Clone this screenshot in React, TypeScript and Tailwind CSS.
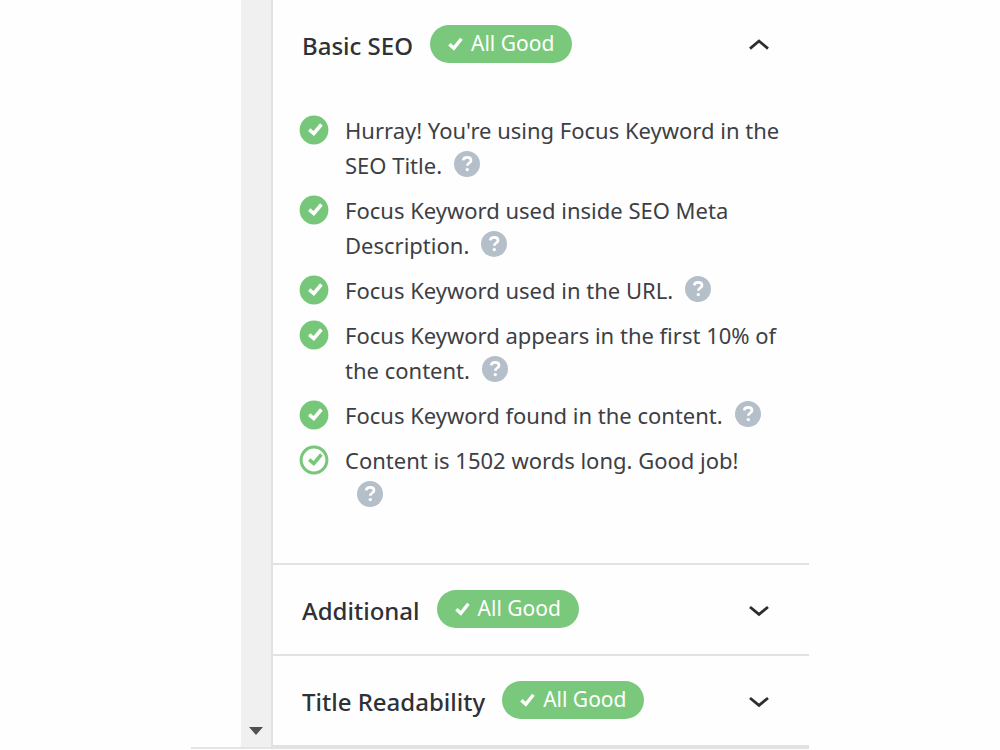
import { useState } from "react";

type Check = { text: string; outlined?: boolean };
type Section = { title: string; checks: Check[] };

const sections: Section[] = [
  {
    title: "Basic SEO",
    checks: [
      { text: "Hurray! You're using Focus Keyword in the SEO Title." },
      { text: "Focus Keyword used inside SEO Meta Description." },
      { text: "Focus Keyword used in the URL." },
      { text: "Focus Keyword appears in the first 10% of the content." },
      { text: "Focus Keyword found in the content." },
      { text: "Content is 1502 words long. Good job!", outlined: true },
    ],
  },
  { title: "Additional", checks: [] },
  { title: "Title Readability", checks: [] },
];

function StatusIcon({ outlined }: { outlined?: boolean }) {
  return (
    <svg viewBox="0 0 30 30" className="mt-0.5 size-[30px] shrink-0" fill="none" aria-hidden="true">
      {outlined ? (
        <circle cx="15" cy="15" r="12.9" fill="#fff" stroke="#76c779" strokeWidth="3" />
      ) : (
        <circle cx="15" cy="15" r="14.4" fill="#76c779" />
      )}
      <path
        d="M10.2 14.6l4.6 3.9 7.6-9"
        stroke={outlined ? "#76c779" : "#fff"}
        strokeWidth="3.5"
      />
    </svg>
  );
}

function Badge() {
  return (
    <span className="flex h-[38px] items-center gap-2 rounded-full bg-[#7ac87b] pr-[18px] pl-[18px] text-[21px] font-normal text-white">
      <svg viewBox="0 0 15 14" className="h-[14px] w-[15px]" fill="none" aria-hidden="true">
        <path d="M1.4 7.2l4.4 4 7.6-9.4" stroke="#fff" strokeWidth="3.4" />
      </svg>
      All Good
    </span>
  );
}

function HelpLink({ label }: { label: string }) {
  return (
    <a href="#help" aria-label={`Help: ${label}`} className="mr-2 ml-3 inline-block align-[-3px]">
      <svg viewBox="0 0 26 26" className="size-[26px]" fill="none" aria-hidden="true">
        <circle cx="13" cy="13" r="13" fill="#b5bfca" />
        <path
          d="M9.2 9.4c.3-2 1.8-3 3.9-3 2.3 0 3.9 1.1 3.9 3 0 2.7-3.7 2.5-3.7 5.3"
          stroke="#fff"
          strokeWidth="2.7"
        />
        <circle cx="13.3" cy="18.6" r="1.7" fill="#fff" />
      </svg>
    </a>
  );
}

function Chevron({ open }: { open: boolean }) {
  return (
    <svg viewBox="0 0 20 16" className="ml-auto h-4 w-5" fill="none" aria-hidden="true">
      <path
        d={open ? "M1 12.6L10 5l9 7.6" : "M1 6l9 7.4L19 6"}
        stroke="#2b2d30"
        strokeWidth="2.8"
      />
    </svg>
  );
}

function Panel({ section, initiallyOpen }: { section: Section; initiallyOpen: boolean }) {
  const [open, setOpen] = useState(initiallyOpen);
  return (
    <section className="border-b-2 border-[#e1e2e2] last:border-b-4">
      <h2>
        <button
          type="button"
          aria-expanded={open}
          onClick={() => setOpen(!open)}
          className="flex h-[89px] w-full items-center pr-10 pb-0.5 pl-[29px] text-left"
        >
          <span className="mr-[17px] pt-1 text-2xl font-medium text-[#2e3136]">{section.title}</span>
          <Badge />
          <Chevron open={open} />
        </button>
      </h2>
      {open && section.checks.length > 0 && (
        <ul className="flex flex-col gap-[10px] pt-6 pr-7 pb-[50px] pl-[26px]">
          {section.checks.map((check) => (
            <li key={check.text} className="flex gap-4">
              <StatusIcon outlined={check.outlined} />
              <p className="text-[22px] leading-[35px] text-[#3d3f45]">
                {check.text}
                <HelpLink label={check.text} />
              </p>
            </li>
          ))}
        </ul>
      )}
    </section>
  );
}

export default function App() {
  return (
    <div className="min-h-screen bg-[#fefefe] font-['Noto_Sans',sans-serif]">
      <main className="mx-auto flex max-w-[618px]">
        <div className="flex w-20 shrink-0 border-b-2 border-[#e4e4e4]">
          <div className="ml-auto flex w-[30px] items-end justify-center bg-[#f0f0f0] pb-3">
            <svg viewBox="0 0 14 8" className="h-2 w-[14px]" aria-hidden="true">
              <path d="M0 0h14L7 8z" fill="#505050" />
            </svg>
          </div>
        </div>
        <div className="min-w-0 flex-1 border-l-2 border-[#e1e2e2]">
          {sections.map((section, index) => (
            <Panel key={section.title} section={section} initiallyOpen={index === 0} />
          ))}
        </div>
      </main>
    </div>
  );
}
